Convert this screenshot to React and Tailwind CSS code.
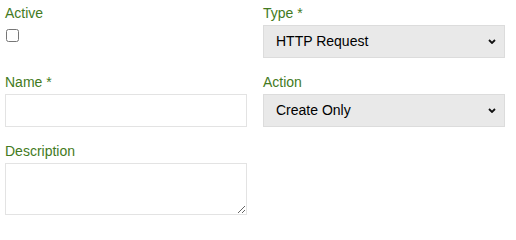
import React from 'react';

// Label used above every field
const FieldLabel = ({ children }) => (
  <label className="block text-[14px] leading-4 text-[#437a22] mb-1">{children}</label>
);

// Grey dropdown with a small chevron on the right
const SelectField = ({ label, value, options }) => (
  <div>
    <FieldLabel>{label}</FieldLabel>
    <div className="relative">
      <select
        defaultValue={value}
        className="appearance-none w-full h-[33px] bg-[#e9e9e9] border border-[#dcdcdc] pl-3 pr-8 text-[14px] text-black outline-none"
      >
        {options.map((o) => (
          <option key={o}>{o}</option>
        ))}
      </select>
      <svg
        className="absolute right-[9px] top-[14px] pointer-events-none"
        width="8"
        height="5"
        viewBox="0 0 8 5"
      >
        <path d="M1 1 L4 4 L7 1" fill="none" stroke="#111" strokeWidth="1.8" />
      </svg>
    </div>
  </div>
);

export default function App() {
  return (
    <div className="w-[516px] h-[227px] bg-white pt-[5px] pl-[5px] font-['Liberation_Sans',Arial,sans-serif]">
      <div className="grid grid-cols-[242px_242px] gap-x-4 gap-y-4">
        {/* Active */}
        <div>
          <FieldLabel>Active</FieldLabel>
          {/* label margin collapses with this one, so mt-2 gives a 8px gap */}
          <input type="checkbox" className="block w-[13px] h-[13px] mt-2 ml-px" />
        </div>

        <SelectField label="Type *" value="HTTP Request" options={['HTTP Request', 'Email', 'Script']} />

        {/* Name */}
        <div>
          <FieldLabel>Name *</FieldLabel>
          <input
            type="text"
            className="block w-full h-[33px] border border-[#e3e3e3] bg-white px-2 text-[14px] outline-none"
          />
        </div>

        <SelectField label="Action" value="Create Only" options={['Create Only', 'Update Only', 'Create or Update']} />

        {/* Description */}
        <div>
          <FieldLabel>Description</FieldLabel>
          <textarea className="block w-full h-[52px] border border-[#e3e3e3] bg-white px-2 text-[14px] outline-none" />
        </div>
        <div />
      </div>
    </div>
  );
}
